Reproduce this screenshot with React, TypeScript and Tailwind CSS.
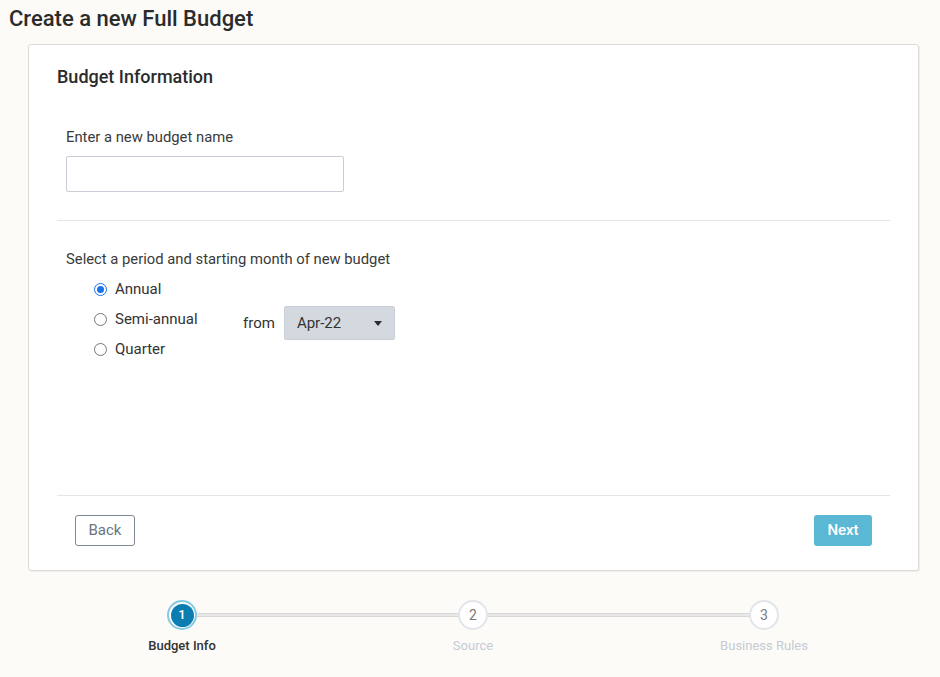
import React from "react";

function Radio({ checked, label }: { checked?: boolean; label: string }) {
  return (
    <div className="flex h-[30px] items-center">
      {checked ? (
        <span className="flex h-[13px] w-[13px] items-center justify-center rounded-full border-[1.5px] border-[#1a73e8] bg-white">
          <span className="h-[7px] w-[7px] rounded-full bg-[#1a73e8]" />
        </span>
      ) : (
        <span className="h-[13px] w-[13px] rounded-full border-[1.5px] border-[#767676] bg-white" />
      )}
      <span className="ml-[8px] text-[15px] text-[#333333]">{label}</span>
    </div>
  );
}

function Step({ n, label, active }: { n: number; label: string; active?: boolean }) {
  return (
    <div className="flex w-[30px] flex-col items-center">
      {active ? (
        <div className="flex h-[30px] w-[30px] items-center justify-center rounded-full border-[2px] border-[#86c9e3] bg-white p-[1.5px]">
          <div className="flex h-full w-full items-center justify-center rounded-full bg-[#0b7db1] text-[13px] font-medium text-white">
            {n}
          </div>
        </div>
      ) : (
        <div className="flex h-[30px] w-[30px] items-center justify-center rounded-full border-[2px] border-[#e1e5ea] bg-white text-[14px] text-[#7a7a7a]">
          {n}
        </div>
      )}
      <div
        className={
          "mt-[7px] whitespace-nowrap text-[13px] leading-[17px] " +
          (active ? "font-medium text-[#333333]" : "text-[#c5ccd5]")
        }
      >
        {label}
      </div>
    </div>
  );
}

export default function App() {
  return (
    <div
      className="h-[677px] w-[940px] overflow-hidden bg-[#fcfbf7]"
      style={{ fontFamily: "Roboto, 'Liberation Sans', sans-serif" }}
    >
      <div className="pl-[9px] pt-[5px] text-[22px] font-medium leading-[28px] text-[#2b2b2b]">
        Create a new Full Budget
      </div>
      <div className="ml-[28px] mt-[11px] flex h-[527px] w-[891px] flex-col rounded-[3px] border border-[#dddbd4] bg-white px-[28px] shadow-[1px_1px_1px_rgba(0,0,0,0.06)]">
        <div className="pt-[20px] text-[18px] font-medium leading-[24px] text-[#2b2b2b]">
          Budget Information
        </div>
        <div className="px-[9px]">
          <div className="mt-[38px] text-[14.8px] leading-[20px] text-[#3a3a3a]">
            Enter a new budget name
          </div>
          <div className="mt-[9px] h-[36px] w-[278px] rounded-[2px] border border-[#c9ced6] bg-white" />
        </div>
        <div className="mt-[28px] h-px bg-[#e6e6e6]" />
        <div className="px-[9px]">
          <div className="mt-[28px] text-[14.8px] leading-[20px] text-[#3a3a3a]">
            Select a period and starting month of new budget
          </div>
          <div className="mt-[5px] flex items-center pl-[28px]">
            <div className="w-[149px]">
              <Radio checked label="Annual" />
              <Radio label="Semi-annual" />
              <Radio label="Quarter" />
            </div>
            <div className="mt-[8px] flex items-center">
              <span className="text-[15px] text-[#333333]">from</span>
              <div className="ml-[9px] flex h-[34px] w-[111px] items-center justify-between rounded-[2px] border border-[#c9cfd6] bg-[#d4d9df] pl-[12px] pr-[12px]">
                <span className="text-[15px] text-[#333333]">Apr-22</span>
                <svg width="8" height="5" viewBox="0 0 8 5">
                  <path d="M0 0 L8 0 L4 5 Z" fill="#2b2b2b" />
                </svg>
              </div>
            </div>
          </div>
        </div>
        <div className="flex-1" />
        <div className="h-px bg-[#e6e6e6]" />
        <div className="flex justify-between px-[18px] pb-[24px] pt-[19px]">
          <button className="h-[31px] w-[60px] rounded-[3px] border border-[#7f8791] bg-white text-[15px] text-[#6b7480]">
            Back
          </button>
          <button className="h-[31px] w-[58px] rounded-[3px] bg-[#5bb8d5] text-[15px] font-medium text-white">
            Next
          </button>
        </div>
      </div>
      <div className="ml-[167px] mt-[29px] flex items-start">
        <Step n={1} label="Budget Info" active />
        <div className="mt-[13px] h-[4px] w-[261px] border-y border-[#d7d7d7] bg-[#e9e9e9]" />
        <Step n={2} label="Source" />
        <div className="mt-[13px] h-[4px] w-[261px] border-y border-[#d7d7d7] bg-[#e9e9e9]" />
        <Step n={3} label="Business Rules" />
      </div>
    </div>
  );
}
